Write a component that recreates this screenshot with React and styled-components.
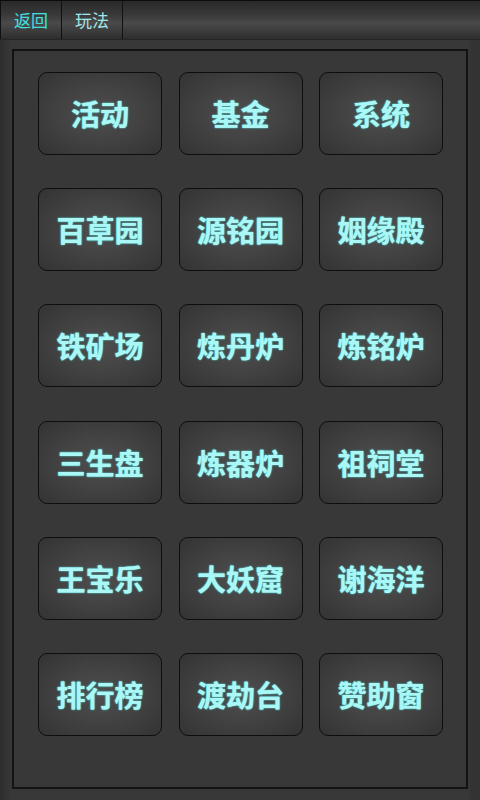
import React from 'react';
import styled, { createGlobalStyle } from 'styled-components';

const GlobalStyles = createGlobalStyle`
  html, body {
    margin: 0;
    padding: 0;
    background: #363636;
    font-family: "Noto Sans CJK SC", "Noto Sans", sans-serif;
  }
  #root {
    width: 480px;
    height: 800px;
    overflow: hidden;
  }
`;

const Screen = styled.div`
  width: 480px;
  height: 800px;
  background: linear-gradient(90deg, #2e2e2e 0px, #383838 12px, #383838 468px, #333 472px);
  display: flex;
  flex-direction: column;
`;

const TopBar = styled.div`
  height: 38px;
  flex-shrink: 0;
  display: flex;
  border-top: 1px solid #0c0c0c;
  border-bottom: 1px solid #262626;
  background: linear-gradient(180deg, #2a2a2a 0%, #383838 35%, #4a4a4a 58%, #3a3a3a 82%, #2e2e2e 100%);
`;

const TabButton = styled.div`
  width: ${p => (p.$first ? '62px' : '61px')};
  height: 38px;
  display: flex;
  align-items: center;
  justify-content: center;
  border-right: 1px solid #101010;
  border-left: ${p => (p.$first ? '1px solid #101010' : 'none')};
  box-sizing: border-box;
  font-size: 17px;
  color: ${p => (p.$active ? '#3fe0e0' : '#a3e8e8')};
  padding-bottom: 2px;
`;

const Panel = styled.div`
  margin: 9px 12px 0;
  height: 740px;
  box-sizing: border-box;
  border: 2px solid #121212;
  background: #383838;
  padding: 21px 22px 0 24px;
`;

const Grid = styled.div`
  display: grid;
  grid-template-columns: repeat(3, 124px);
  grid-auto-rows: 83px;
  column-gap: 16.5px;
  row-gap: 33.2px;
`;

const MenuButton = styled.div`
  box-sizing: border-box;
  border: 1px solid #0e0e0e;
  border-radius: 9px;
  background: radial-gradient(ellipse at 50% 50%, #4e4e4e 0%, #434343 45%, #333 100%);
  display: flex;
  align-items: center;
  justify-content: center;
  font-size: 29px;
  font-weight: 700;
  color: #aaf7f5;
  text-shadow: 0 0 2px rgba(80, 230, 230, 0.8), 0 0 1px rgba(140, 255, 255, 0.9);
  padding-bottom: 1px;
`;

const items = [
  '活动', '基金', '系统',
  '百草园', '源铭园', '姻缘殿',
  '铁矿场', '炼丹炉', '炼铭炉',
  '三生盘', '炼器炉', '祖祠堂',
  '王宝乐', '大妖窟', '谢海洋',
  '排行榜', '渡劫台', '赞助窗',
];

export default function App() {
  return (
    <>
      <GlobalStyles />
      <Screen>
        <TopBar>
          <TabButton $first $active>返回</TabButton>
          <TabButton>玩法</TabButton>
        </TopBar>
        <Panel>
          <Grid>
            {items.map(name => (
              <MenuButton key={name}>{name}</MenuButton>
            ))}
          </Grid>
        </Panel>
      </Screen>
    </>
  );
}
